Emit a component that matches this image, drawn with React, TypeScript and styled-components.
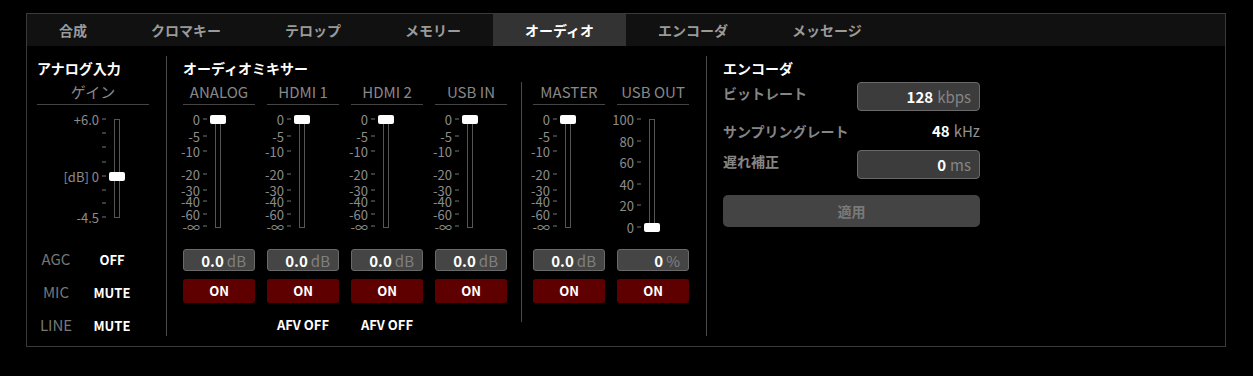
import React from "react";
import styled, { createGlobalStyle } from "styled-components";

const GlobalStyle = createGlobalStyle`
  body {
    margin: 0;
    background: #000;
    font-family: "Noto Sans CJK JP", "Noto Sans", sans-serif;
  }
`;

interface Tick {
  label: string;
  pos: number;
}

interface ChannelItem {
  name: string;
  ticks: Tick[];
  handle: number;
  value: string;
  unit: string;
  afv?: boolean;
}

const dbTicks: Tick[] = [
  { label: "0", pos: 0 },
  { label: "-5", pos: 17 },
  { label: "-10", pos: 32 },
  { label: "-20", pos: 55 },
  { label: "-30", pos: 71 },
  { label: "-40", pos: 82 },
  { label: "-60", pos: 95 },
  { label: "-∞", pos: 107 },
];

const pctTicks: Tick[] = [
  { label: "100", pos: 0 },
  { label: "80", pos: 21.6 },
  { label: "60", pos: 43 },
  { label: "40", pos: 64.6 },
  { label: "20", pos: 86 },
  { label: "0", pos: 107.6 },
];

const gainTicks: Tick[] = [
  { label: "+6.0", pos: 0 },
  { label: "", pos: 14 },
  { label: "", pos: 28 },
  { label: "", pos: 43 },
  { label: "[dB] 0", pos: 57 },
  { label: "", pos: 71 },
  { label: "", pos: 84 },
  { label: "-4.5", pos: 98 },
];

const inputs: ChannelItem[] = [
  { name: "ANALOG", ticks: dbTicks, handle: 0, value: "0.0", unit: "dB" },
  { name: "HDMI 1", ticks: dbTicks, handle: 0, value: "0.0", unit: "dB", afv: true },
  { name: "HDMI 2", ticks: dbTicks, handle: 0, value: "0.0", unit: "dB", afv: true },
  { name: "USB IN", ticks: dbTicks, handle: 0, value: "0.0", unit: "dB" },
];

const outputs: ChannelItem[] = [
  { name: "MASTER", ticks: dbTicks, handle: 0, value: "0.0", unit: "dB" },
  { name: "USB OUT", ticks: pctTicks, handle: 108, value: "0", unit: "%" },
];

const tabs = ["合成", "クロマキー", "テロップ", "メモリー", "オーディオ", "エンコーダ", "メッセージ"];

const Fader = (props: { ticks: Tick[]; length: number; handle: number; scaleWidth: number }) => {
  return (
    <FaderWrap>
      <Scale $width={props.scaleWidth} $length={props.length}>
        {props.ticks.map((t, i) => (
          <TickLabel key={i} style={{ top: t.pos }}>
            {t.label}
            <TickMark />
          </TickLabel>
        ))}
      </Scale>
      <TrackArea $length={props.length}>
        <Track $length={props.length} />
        <Handle style={{ top: props.handle }} />
      </TrackArea>
    </FaderWrap>
  );
};

const Channel = ({ ch }: { ch: ChannelItem }) => (
  <Column>
    <ColumnHeader>{ch.name}</ColumnHeader>
    <Fader ticks={ch.ticks} length={108} handle={ch.handle} scaleWidth={24} />
    <ValueBox>
      <b>{ch.value}</b>
      <span>{ch.unit}</span>
    </ValueBox>
    <OnButton>ON</OnButton>
    {ch.afv && <AfvLabel>AFV OFF</AfvLabel>}
  </Column>
);

const App = () => {
  return (
    <>
      <GlobalStyle />
      <Frame>
        <TabBar>
          {tabs.map((t) => (
            <Tab key={t} $active={t === "オーディオ"}>
              {t}
            </Tab>
          ))}
        </TabBar>
        <Body>
          <AnalogSection>
            <SectionTitle>アナログ入力</SectionTitle>
            <ColumnHeader>ゲイン</ColumnHeader>
            <Fader ticks={gainTicks} length={98} handle={57} scaleWidth={69} />
            <SwitchList>
              <SwitchLabel>AGC</SwitchLabel>
              <SwitchValue>OFF</SwitchValue>
              <SwitchLabel>MIC</SwitchLabel>
              <SwitchValue>MUTE</SwitchValue>
              <SwitchLabel>LINE</SwitchLabel>
              <SwitchValue>MUTE</SwitchValue>
            </SwitchList>
          </AnalogSection>
          <MixerSection>
            <SectionTitle>オーディオミキサー</SectionTitle>
            <ChannelRow>
              <ChannelGroup>
                {inputs.map((c) => (
                  <Channel key={c.name} ch={c} />
                ))}
              </ChannelGroup>
              <Divider />
              <ChannelGroup>
                {outputs.map((c) => (
                  <Channel key={c.name} ch={c} />
                ))}
              </ChannelGroup>
            </ChannelRow>
          </MixerSection>
          <EncoderSection>
            <SectionTitle>エンコーダ</SectionTitle>
            <EncoderRow $gap={2}>
              <EncoderLabel>ビットレート</EncoderLabel>
              <EncoderInput>
                <b>128</b>
                <span>kbps</span>
              </EncoderInput>
            </EncoderRow>
            <EncoderRow $gap={9} $center>
              <EncoderLabel>サンプリングレート</EncoderLabel>
              <EncoderValue>
                <b>48</b>
                <span>kHz</span>
              </EncoderValue>
            </EncoderRow>
            <EncoderRow $gap={8}>
              <EncoderLabel>遅れ補正</EncoderLabel>
              <EncoderInput>
                <b>0</b>
                <span>ms</span>
              </EncoderInput>
            </EncoderRow>
            <ApplyButton>適用</ApplyButton>
          </EncoderSection>
        </Body>
      </Frame>
    </>
  );
};

const Frame = styled.div`
  width: 1200px;
  height: 334px;
  margin: 13px 0 0 26px;
  border: 1px solid #3a3a3a;
  box-sizing: border-box;
  background: #000;
  display: flex;
  flex-direction: column;
`;

const TabBar = styled.div`
  display: flex;
  height: 32px;
  background: #111;
  flex-shrink: 0;
`;

const Tab = styled.div<{ $active?: boolean }>`
  padding: 0 32px;
  line-height: 32px;
  font-size: 14px;
  font-weight: bold;
  color: ${(p) => (p.$active ? "#fff" : "#9a9a9a")};
  background: ${(p) => (p.$active ? "#333" : "transparent")};
  white-space: nowrap;
`;

const Body = styled.div`
  flex: 1;
  display: flex;
  padding: 10px 0 11px 10px;
  box-sizing: border-box;
`;

const Section = styled.div`
  display: flex;
  flex-direction: column;
`;

const AnalogSection = styled(Section)`
  width: 112px;
  padding-right: 17px;
`;

const MixerSection = styled(Section)`
  border-left: 1px solid #4a4a4a;
  padding: 0 17px 0 16px;
`;

const EncoderSection = styled(Section)`
  border-left: 1px solid #4a4a4a;
  padding-left: 16px;
  width: 257px;
`;

const SectionTitle = styled.div`
  font-size: 14px;
  font-weight: bold;
  color: #fff;
  line-height: 24px;
  white-space: nowrap;
`;

const ChannelRow = styled.div`
  display: flex;
  align-items: flex-start;
`;

const ChannelGroup = styled.div`
  display: flex;
  gap: 12px;
`;

const Divider = styled.div`
  width: 1px;
  height: 240px;
  margin: 2px 11px 0 14px;
  background: #4a4a4a;
`;

const Column = styled.div`
  width: 72px;
  display: flex;
  flex-direction: column;
`;

const ColumnHeader = styled.div`
  line-height: 24px;
  font-size: 15px;
  color: #888;
  text-align: center;
  border-bottom: 1px solid #444;
  white-space: nowrap;
`;

const FaderWrap = styled.div`
  height: 144px;
  padding-top: 14px;
  box-sizing: border-box;
  display: flex;
  align-items: flex-start;
`;

const Scale = styled.div<{ $width: number; $length: number }>`
  position: relative;
  width: ${(p) => p.$width}px;
  height: ${(p) => p.$length}px;
`;

const TickLabel = styled.div`
  position: absolute;
  right: 0;
  transform: translateY(-50%);
  display: flex;
  align-items: center;
  gap: 3px;
  font-size: 13px;
  line-height: 11px;
  color: #8c8c8c;
  white-space: nowrap;
`;

const TickMark = styled.span`
  display: block;
  width: 4px;
  height: 1px;
  background: #777;
`;

const TrackArea = styled.div<{ $length: number }>`
  position: relative;
  width: 22px;
  height: ${(p) => p.$length}px;
`;

const Track = styled.div<{ $length: number }>`
  position: absolute;
  left: 8px;
  top: 0;
  width: 6px;
  height: ${(p) => p.$length + 1}px;
  border: 1px solid #555;
  box-sizing: border-box;
`;

const Handle = styled.div`
  position: absolute;
  left: 3px;
  width: 16px;
  height: 9px;
  margin-top: -4px;
  border-radius: 2px;
  background: #fff;
`;

const ValueBox = styled.div`
  height: 22px;
  box-sizing: border-box;
  border: 1px solid #6a6a6a;
  border-radius: 3px;
  background: #454545;
  display: flex;
  justify-content: flex-end;
  align-items: center;
  gap: 3px;
  padding-right: 8px;
  font-size: 15px;
  b {
    color: #fff;
  }
  span {
    color: #808080;
  }
`;

const OnButton = styled.div`
  margin-top: 8px;
  height: 24px;
  line-height: 24px;
  border-radius: 3px;
  background: #5f0000;
  color: #fff;
  font-size: 13px;
  font-weight: bold;
  text-align: center;
`;

const AfvLabel = styled.div`
  margin-top: 12px;
  line-height: 20px;
  font-size: 13px;
  font-weight: bold;
  color: #fff;
  text-align: center;
`;

const SwitchList = styled.div`
  display: grid;
  grid-template-columns: 38px 1fr;
  row-gap: 12px;
  align-items: baseline;
`;

const SwitchLabel = styled.div`
  line-height: 20px;
  font-size: 15px;
  color: #777;
  text-align: center;
`;

const SwitchValue = styled.div`
  line-height: 20px;
  font-size: 13px;
  font-weight: bold;
  color: #fff;
  text-align: center;
`;

const EncoderRow = styled.div<{ $gap: number; $center?: boolean }>`
  margin-top: ${(p) => p.$gap}px;
  display: flex;
  justify-content: space-between;
  align-items: ${(p) => (p.$center ? "center" : "flex-start")};
  min-height: 20px;
`;

const EncoderLabel = styled.div`
  font-size: 14px;
  font-weight: bold;
  color: #858585;
  line-height: 22px;
  white-space: nowrap;
`;

const EncoderInput = styled.div`
  width: 123px;
  height: 29px;
  box-sizing: border-box;
  border: 1px solid #6a6a6a;
  border-radius: 4px;
  background: #3c3c3c;
  display: flex;
  justify-content: flex-end;
  align-items: center;
  gap: 4px;
  padding-right: 8px;
  font-size: 15px;
  b {
    color: #fff;
  }
  span {
    color: #858585;
  }
`;

const EncoderValue = styled.div`
  display: flex;
  gap: 4px;
  font-size: 15px;
  line-height: 20px;
  b {
    color: #fff;
  }
  span {
    color: #909090;
  }
`;

const ApplyButton = styled.div`
  margin-top: 16px;
  height: 32px;
  line-height: 32px;
  border-radius: 5px;
  background: #444;
  color: #7a7a7a;
  font-size: 14px;
  font-weight: bold;
  text-align: center;
`;

export default App;
